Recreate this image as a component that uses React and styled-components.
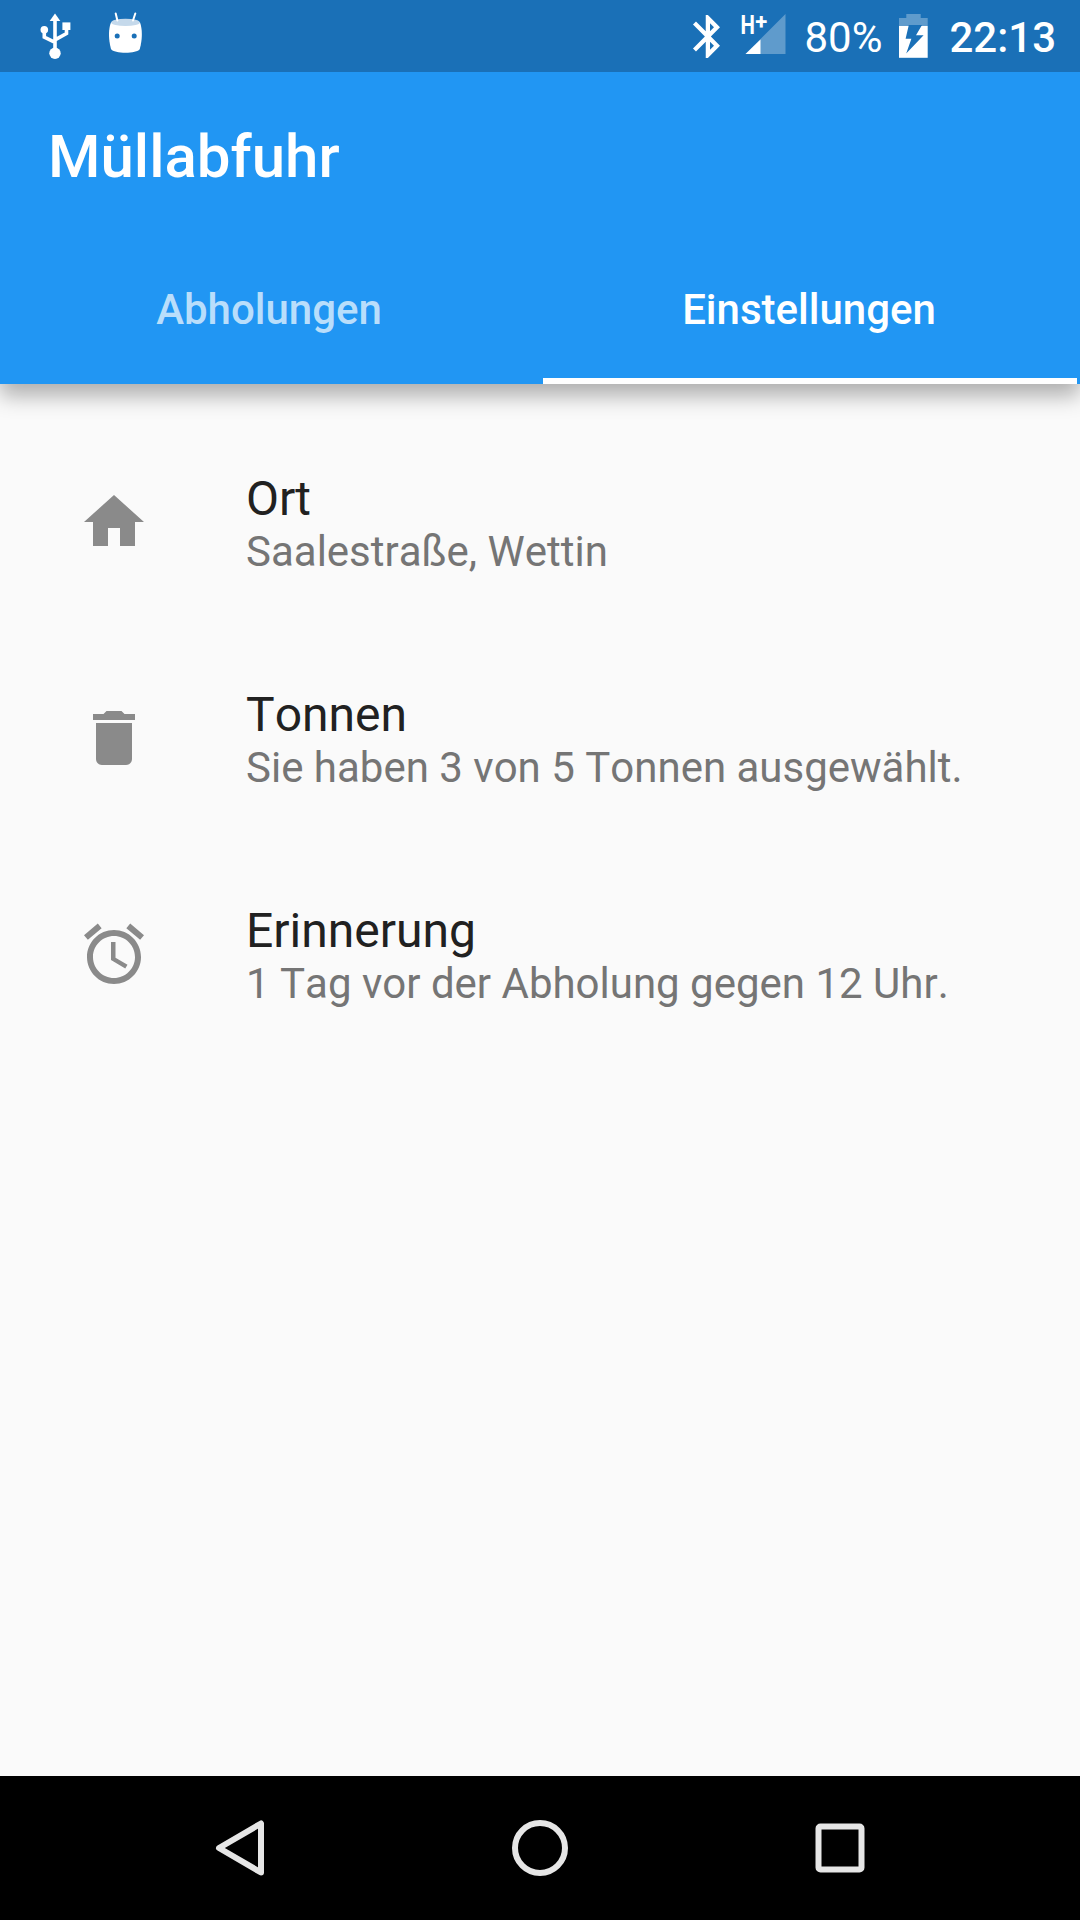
import React from 'react';
import styled, { createGlobalStyle } from 'styled-components';

const color = {
  primary: '#2196f3',
  primaryDark: '#1a70b7',
  background: '#fafafa',
  icon: '#8a8a8a',
  text: '#212121',
  textSecondary: '#757575',
  nav: '#e6e6e6',
};

const GlobalStyle = createGlobalStyle`
  * {
    box-sizing: border-box;
  }
  body {
    margin: 0;
    font-family: Roboto, sans-serif;
    font-kerning: none;
    background: ${color.background};
  }
`;

const Screen = styled.div`
  width: 1080px;
  height: 1920px;
  display: flex;
  flex-direction: column;
  overflow: hidden;
  background: ${color.background};
`;

const StatusBar = styled.div`
  position: relative;
  z-index: 1;
  flex: 0 0 72px;
  display: flex;
  justify-content: space-between;
  padding: 0 24px 0 40px;
  background: ${color.primaryDark};
  color: #fff;
`;

const StatusGroup = styled.div`
  display: flex;
  align-items: flex-start;
`;

const StatusIcon = styled.svg`
  display: block;
  flex: none;
  overflow: visible;
  margin-top: ${({ $top }) => $top}px;
  margin-right: ${({ $gap = 0 }) => $gap}px;
`;

const StatusText = styled.span`
  margin-top: 4px;
  margin-right: ${({ $gap = 0 }) => $gap}px;
  font-size: 42px;
  line-height: 68px;
  font-weight: ${({ $weight = 400 }) => $weight};
`;

const Header = styled.header`
  flex: 0 0 312px;
  display: flex;
  flex-direction: column;
  background: ${color.primary};
  box-shadow: 0 12px 20px rgba(0, 0, 0, 0.3);
  color: #fff;
`;

const Title = styled.h1`
  flex: 0 0 168px;
  margin: 0;
  padding: 2px 0 0 48px;
  font-size: 60px;
  font-weight: 500;
  line-height: 166px;
`;

const Tabs = styled.nav`
  flex: 1;
  display: flex;
`;

const Tab = styled.div`
  flex: 1;
  display: flex;
  flex-direction: column;
  padding-top: 2px;
  text-align: center;
  text-indent: -2px;
  font-size: 42px;
  font-weight: 500;
  line-height: 136px;
  color: ${({ $active }) => ($active ? '#fff' : 'rgba(255, 255, 255, 0.7)')};

  &::after {
    content: '';
    height: 6px;
    margin: 0 3px;
    background: ${({ $active }) => ($active ? '#fff' : 'transparent')};
  }
`;

const List = styled.main`
  flex: 1;
  padding-top: 30px;
`;

const Item = styled.div`
  height: 216px;
  display: flex;
  align-items: center;
  padding-left: 78px;
`;

const ItemIcon = styled.svg`
  width: 72px;
  height: 72px;
  margin-right: 96px;
  fill: ${color.icon};
`;

const ItemBody = styled.div`
  padding-top: 4px;
`;

const ItemTitle = styled.div`
  font-size: 48px;
  line-height: 56px;
  color: ${color.text};
`;

const ItemText = styled.div`
  font-size: 42px;
  line-height: 50px;
  color: ${color.textSecondary};
`;

const NavBar = styled.footer`
  flex: 0 0 144px;
  display: flex;
  justify-content: center;
  align-items: center;
  gap: 228px;
  background: #000;
`;

const NavIcon = styled.svg`
  width: 72px;
  height: 72px;
  fill: none;
  stroke: ${color.nav};
  stroke-width: 6;
`;

const items = [
  {
    title: 'Ort',
    text: 'Saalestraße, Wettin',
    icon: 'M10 20v-6h4v6h5v-8h3L12 3 2 12h3v8z',
  },
  {
    title: 'Tonnen',
    text: 'Sie haben 3 von 5 Tonnen ausgewählt.',
    icon: 'M6 19c0 1.1.9 2 2 2h8c1.1 0 2-.9 2-2V7H6v12zM19 4h-3.5l-1-1h-5l-1 1H5v2h14V4z',
  },
  {
    title: 'Erinnerung',
    text: '1 Tag vor der Abholung gegen 12 Uhr.',
    icon:
      'M22 5.72l-4.6-3.86-1.29 1.53 4.6 3.86L22 5.72zM7.88 3.39L6.6 1.86 2 5.71l1.29 1.53 4.59-3.85zM12.5 8H11v6l4.75 2.85.75-1.23-4-2.37V8zM12 4c-4.97 0-9 4.03-9 9s4.02 9 9 9c4.97 0 9-4.03 9-9s-4.03-9-9-9zm0 16c-3.87 0-7-3.13-7-7s3.13-7 7-7 7 3.13 7 7-3.13 7-7 7z',
  },
];

const UsbIcon = () => (
  <StatusIcon $top={13} $gap={36} width="32" height="48" viewBox="0 0 32 48" fill="#fff">
    <path d="M15 0.5L20.3 8H9.7z" />
    <circle cx="15" cy="40.3" r="5.7" />
    <circle cx="4.3" cy="16.8" r="3.8" />
    <rect x="22.4" y="9.4" width="8" height="7.6" />
    <path
      d="M15 6v34M4.3 17v7.2L15 29.3M26.5 16v4.5L15 26.8"
      fill="none"
      stroke="#fff"
      strokeWidth="3.6"
    />
  </StatusIcon>
);

const DroidIcon = () => (
  <StatusIcon $top={12} width="35" height="42" viewBox="0 0 35 42">
    <path
      d="M3 10.5C7 8 28 8 32 10.5C34.5 17 34.5 27 31.8 37C29 42 6 42 3 37C0.3 27 0.3 17 3 10.5z"
      fill="#fff"
    />
    <ellipse cx="17.5" cy="10.4" rx="14.3" ry="3.7" fill="#c5d9eb" />
    <path d="M7.7 1.5L9.4 8.5M27.3 1.5L25 8.5" stroke="#fff" strokeWidth="2" strokeLinecap="round" />
    <circle cx="9.2" cy="24" r="2.5" fill={color.primaryDark} />
    <circle cx="26.2" cy="24" r="2.5" fill={color.primaryDark} />
  </StatusIcon>
);

const BluetoothIcon = () => (
  <StatusIcon
    $top={15}
    $gap={21}
    width="27"
    height="43"
    viewBox="5 2 12.71 20"
    preserveAspectRatio="none"
    fill="#fff"
  >
    <path d="M17.71 7.71L12 2h-1v7.59L6.41 5 5 6.41 10.59 12 5 17.59 6.41 19 11 14.41V22h1l5.71-5.71-4.3-4.29 4.3-4.29zM13 5.83l1.88 1.88L13 9.59V5.83zm1.88 10.46L13 18.17v-3.76l1.88 1.88z" />
  </StatusIcon>
);

const SignalIcon = () => (
  <StatusIcon $top={14} $gap={18} width="45" height="40" viewBox="0 0 45 40" fill="#fff">
    <path d="M44.5 0V40H4.5z" opacity="0.3" />
    <path d="M19.5 25.5V40H4.5z" />
    <text transform="translate(-0.4 20) scale(0.8 1)" fontSize="25.5" fontWeight="700">
      H
    </text>
    <text x="20.2" y="14.8" fontSize="22" fontWeight="700" textAnchor="middle">
      +
    </text>
  </StatusIcon>
);

const BatteryIcon = () => (
  <StatusIcon $top={14} $gap={21} width="29" height="44" viewBox="0 0 29 44">
    <path d="M7.3 0H21.7V4H28.7V12H0V4H7.3z" fill="#fff" opacity="0.3" />
    <path d="M0 12H28.7V43.8H0z" fill="#fff" />
    <path d="M9.8 11H23L17 21.3H24.6L7.2 39.5L12.4 24.7H6.6z" fill={color.primaryDark} />
  </StatusIcon>
);

const App = () => (
  <Screen>
    <GlobalStyle />
    <StatusBar>
      <StatusGroup>
        <UsbIcon />
        <DroidIcon />
      </StatusGroup>
      <StatusGroup>
        <BluetoothIcon />
        <SignalIcon />
        <StatusText $gap={17}>80%</StatusText>
        <BatteryIcon />
        <StatusText $weight={500}>22:13</StatusText>
      </StatusGroup>
    </StatusBar>
    <Header>
      <Title>Müllabfuhr</Title>
      <Tabs>
        <Tab>Abholungen</Tab>
        <Tab $active>Einstellungen</Tab>
      </Tabs>
    </Header>
    <List>
      {items.map(({ title, text, icon }) => (
        <Item key={title}>
          <ItemIcon viewBox="0 0 24 24">
            <path d={icon} />
          </ItemIcon>
          <ItemBody>
            <ItemTitle>{title}</ItemTitle>
            <ItemText>{text}</ItemText>
          </ItemBody>
        </Item>
      ))}
    </List>
    <NavBar>
      <NavIcon viewBox="0 0 72 72">
        <path d="M57 11.5V60.5L15 36z" strokeLinejoin="round" />
      </NavIcon>
      <NavIcon viewBox="0 0 72 72">
        <circle cx="36" cy="36" r="25" />
      </NavIcon>
      <NavIcon viewBox="0 0 72 72">
        <rect x="14.5" y="14.5" width="43" height="43" rx="2" />
      </NavIcon>
    </NavBar>
  </Screen>
);

export default App;
